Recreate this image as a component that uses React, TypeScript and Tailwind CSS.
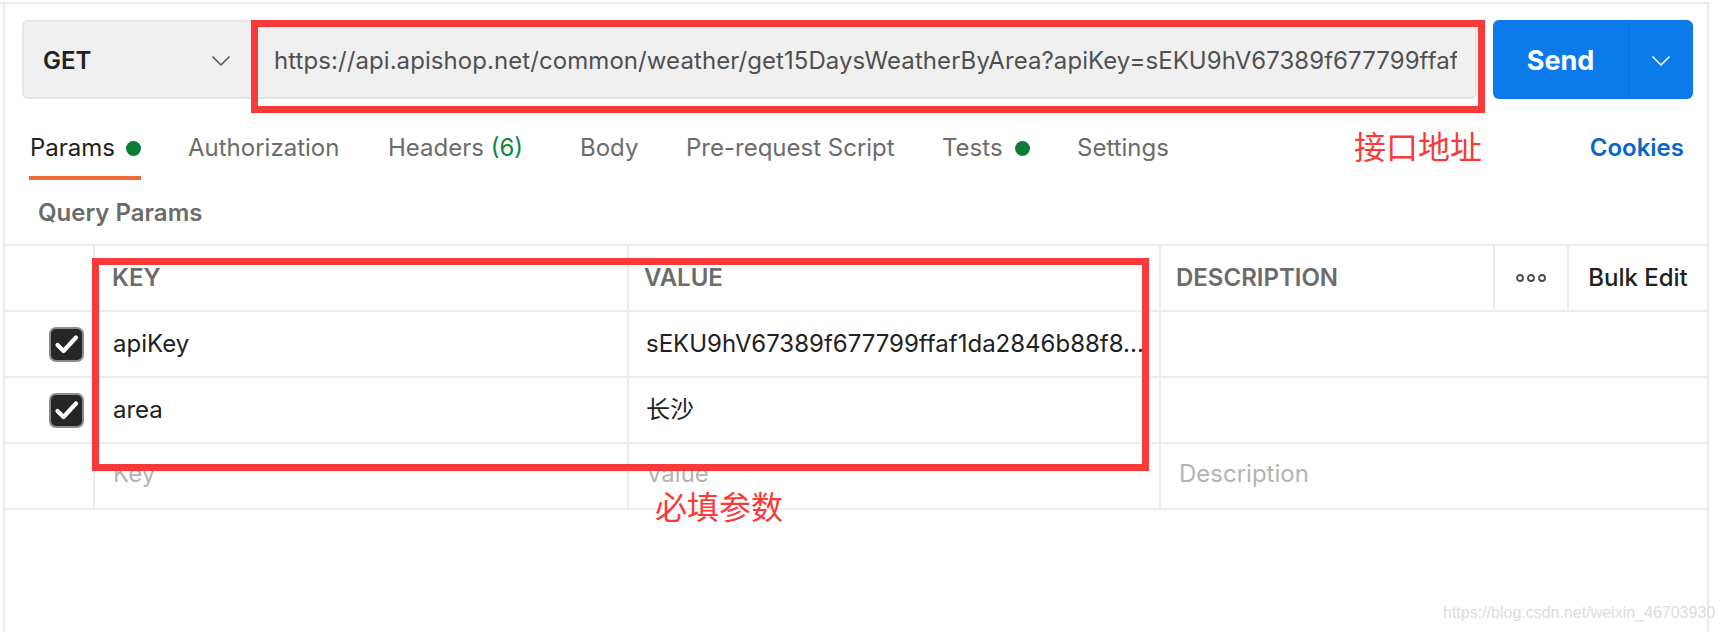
import React from "react";

function Chevron({ className = "" }: { className?: string }) {
  return (
    <svg width="18" height="10" viewBox="0 0 18 10" className={className} fill="none">
      <path d="M1 1l8 8 8-8" stroke="currentColor" strokeWidth="1.7" strokeLinecap="round" strokeLinejoin="round" />
    </svg>
  );
}

function Check() {
  return (
    <div className="flex h-[35px] w-[35px] items-center justify-center rounded-[7px] border-2 border-[#8d8d8d] bg-[#262626]">
      <svg width="31" height="31" viewBox="0 0 31 31" fill="none">
        <path d="M6.5 16l6 6L25 8.5" stroke="#ffffff" strokeWidth="4.2" strokeLinecap="round" strokeLinejoin="round" />
      </svg>
    </div>
  );
}

function Dots() {
  return (
    <svg width="30" height="8" viewBox="0 0 30 8" fill="none">
      <circle cx="4" cy="4" r="3" stroke="#4a4a4a" strokeWidth="1.8" />
      <circle cx="15" cy="4" r="3" stroke="#4a4a4a" strokeWidth="1.8" />
      <circle cx="26" cy="4" r="3" stroke="#4a4a4a" strokeWidth="1.8" />
    </svg>
  );
}

function Row({
  checked,
  k,
  v,
  placeholder,
}: {
  checked?: boolean;
  k: string;
  v: string;
  placeholder?: boolean;
}) {
  const txt = placeholder ? "text-[#b3b3b3] pb-[5px]" : "text-[#212121]";
  return (
    <div className="flex h-[66px] border-b-2 border-[#ececec]">
      <div className="flex w-[90px] items-center justify-end border-r-2 border-[#ececec] pr-[9px]">
        {checked ? <Check /> : null}
      </div>
      <div className={`flex w-[534px] items-center border-r-2 border-[#ececec] pl-[18px] leading-[32px] ${txt}`}>
        {k}
      </div>
      <div className={`flex w-[532px] min-w-0 items-center border-r-2 border-[#ececec] pl-[17px] pr-[10px] leading-[32px] ${txt}`}>
        <div className="min-w-0 overflow-hidden whitespace-nowrap">{v}</div>
      </div>
      <div className="flex flex-1 items-center pb-[5px] pl-[18px] leading-[32px] text-[#b3b3b3]">
        {placeholder ? "Description" : ""}
      </div>
    </div>
  );
}

export default function App() {
  return (
    <div className="relative h-[632px] w-[1724px] overflow-hidden bg-white font-['Inter','Noto_Sans_CJK_SC',sans-serif] text-[24px]">
      <div className="mt-[2px] w-[1709px] border-t-2 border-[#ebebeb]">
        <div className="ml-[3px] flex h-[628px] flex-col border-x-2 border-[#ebebeb]">
          {/* Request bar */}
          <div className="mt-[16px] flex h-[79px] pl-[17px]">
            <div className="flex w-[1455px] rounded-[6px] border-2 border-[#e4e4e4] bg-[#f0f0f0]">
              <div className="flex w-[227px] items-center justify-between pl-[19px] pr-[21px] pt-[2px]">
                <span className="font-semibold leading-[32px] text-[#212121]">GET</span>
                <Chevron className="text-[#5a5a5a]" />
              </div>
              <div className="flex min-w-0 flex-1 items-center pl-[23px] pr-[18px] pt-[2px]">
                <div className="min-w-0 overflow-hidden whitespace-nowrap leading-[32px] tracking-[0.07px] text-[#505050]">
                  https://api.apishop.net/common/weather/get15DaysWeatherByArea?apiKey=sEKU9hV67389f677799ffaf1da2846b88f8
                </div>
              </div>
            </div>
            <div className="ml-[16px] flex w-[200px] rounded-[6px] bg-[#0b7bec] text-white">
              <div className="flex w-[135px] items-center justify-center pt-[3px] text-[27px] font-bold leading-[32px]">Send</div>
              <div className="flex flex-1 items-center justify-center border-l border-[#0a6fd8] pt-[2px]">
                <Chevron className="text-white" />
              </div>
            </div>
          </div>

          {/* Tabs */}
          <div className="mt-[33px] flex items-start pl-[24px] pr-[23px] leading-[32px]">
            <div className="w-[159px]">
              <div className="inline-flex flex-col">
                <div className="flex h-[32px] items-center gap-[11px] pl-[1px] text-[#212121]">
                  <span>Params</span>
                  <span className="h-[15px] w-[15px] rounded-full bg-[#0b7d35]" />
                </div>
                <div className="mt-[12px] h-[4px] w-full bg-[#f26b3a]" />
              </div>
            </div>
            <div className="w-[200px] text-[#6b6b6b]">Authorization</div>
            <div className="w-[192px] text-[#6b6b6b]">
              Headers <span className="text-[#0a8a3a]">(6)</span>
            </div>
            <div className="w-[106px] text-[#6b6b6b]">Body</div>
            <div className="w-[256px] text-[#6b6b6b]">Pre-request Script</div>
            <div className="flex h-[32px] w-[135px] items-center gap-[12px] text-[#6b6b6b]">
              <span>Tests</span>
              <span className="h-[15px] w-[15px] rounded-full bg-[#0b7d35]" />
            </div>
            <div className="text-[#6b6b6b]">Settings</div>
            <div className="ml-auto font-semibold text-[#0a66cc]">Cookies</div>
          </div>

          {/* Query Params */}
          <div className="mt-[17px] pl-[33px] font-semibold leading-[32px] text-[#6b6b6b]">Query Params</div>

          {/* Table */}
          <div className="mt-[15px] border-t-2 border-[#ececec]">
            <div className="flex h-[66px] border-b-2 border-[#ececec] font-semibold leading-[32px] text-[#6b6b6b]">
              <div className="w-[90px] border-r-2 border-[#ececec]" />
              <div className="flex w-[534px] items-center border-r-2 border-[#ececec] pl-[17px]">KEY</div>
              <div className="flex w-[532px] items-center border-r-2 border-[#ececec] pl-[15px]">VALUE</div>
              <div className="flex w-[334px] items-center border-r-2 border-[#ececec] pl-[15px]">DESCRIPTION</div>
              <div className="flex w-[74px] items-center justify-center border-r-2 border-[#ececec]">
                <Dots />
              </div>
              <div className="flex flex-1 items-center justify-center font-medium text-[#212121]">Bulk Edit</div>
            </div>
            <Row checked k="apiKey" v="sEKU9hV67389f677799ffaf1da2846b88f8..." />
            <Row checked k="area" v="长沙" />
            <Row k="Key" v="Value" placeholder />
          </div>
        </div>
      </div>

      {/* Annotations */}
      <div className="absolute left-[251px] top-[20px] h-[93px] w-[1234px] border-[7px] border-[#fa3939]" />
      <div className="absolute left-[92px] top-[258px] h-[213px] w-[1057px] border-[7px] border-[#fa3939]" />
      <div className="absolute left-[1354px] top-[129px] font-['Noto_Sans_CJK_SC',sans-serif] text-[32px] leading-[32px] text-[#fa3939]">
        接口地址
      </div>
      <div className="absolute left-[655px] top-[489px] font-['Noto_Sans_CJK_SC',sans-serif] text-[32px] leading-[32px] text-[#fa3939]">
        必填参数
      </div>
      <div className="absolute left-[1443px] top-[604px] font-['Liberation_Sans',Arial,sans-serif] text-[16px] leading-[18px] text-[#dcdcdc]">
        https://blog.csdn.net/weixin_46703930
      </div>
    </div>
  );
}
